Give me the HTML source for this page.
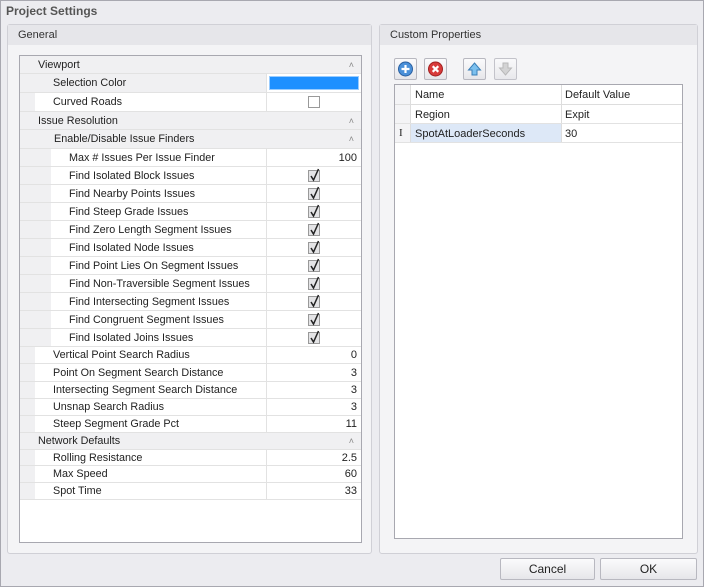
<!DOCTYPE html>
<html><head><meta charset="utf-8"><style>
*{box-sizing:border-box;margin:0;padding:0}
body{width:704px;height:587px;background:#eeeef2;font-family:"Liberation Sans",sans-serif;font-size:11px;color:#222;position:relative;overflow:hidden}
.a{position:absolute}
.win{left:0;top:0;width:704px;height:587px;border:1px solid #a8a8b0;background:#ececf0}
.title{left:6px;top:4px;font-weight:bold;font-size:12px;color:#555}
.grp{border:1px solid #d0d0d6;background:#f4f4f6;border-radius:3px}
.gh{background:#e6e6ea;height:20px;padding:4px 0 0 10px;font-size:11px;color:#333}
.r{position:absolute;left:0;width:341px;border-bottom:1px solid #e2e2e2}
.t{position:absolute;top:50%;transform:translateY(-50%);white-space:nowrap;font-size:10.8px}
.ind{position:absolute;left:0;top:0;bottom:0;background:#f0f0f2}
.v{position:absolute;left:246px;right:0;top:0;bottom:0;border-left:1px solid #e2e2e2;background:#fff}
.num{position:absolute;right:4px;top:50%;transform:translateY(-50%)}
.cb{position:absolute;left:41px;top:50%;transform:translateY(-50%);width:12px;height:12px;border:1px solid #999;background:#e4e4e6}
.arr{position:absolute;right:7px;top:50%;transform:translateY(-50%);color:#888;font-size:9px}
.btn{border:1px solid #b8b8c0;border-radius:2px;background:linear-gradient(#fbfbfc,#e6e6ea)}
</style></head><body>
<div class="a win"></div>
<div class="a title">Project Settings</div>

<div class="a grp" style="left:7px;top:24px;width:365px;height:530px"><div class="gh">General</div></div>
<div class="a" style="left:19px;top:55px;width:343px;height:488px;border:1px solid #a8a8b0;background:#fff"></div>
<div class="a" style="left:20px;top:56px;width:341px;height:444px" id="g">
<div class="r" style="top:0;height:18px;background:#f0f0f2"><span class="t" style="left:18px">Viewport</span><span class="arr">&#x2C4;</span></div>
<div class="r" style="top:18px;height:19px;background:#f0f0f2"><div class="ind" style="width:15px"></div><span class="t" style="left:33px">Selection Color</span><div class="v" style="background:#fff"><div class="a" style="left:2px;top:2px;right:2px;bottom:2px;background:#1e90ff;border:1px solid #9cf"></div></div></div>
<div class="r" style="top:37px;height:19px"><div class="ind" style="width:15px"></div><span class="t" style="left:33px">Curved Roads</span><div class="v"><div class="cb" style="background:#fff"></div></div></div>
<div class="r" style="top:56px;height:18px;background:#f0f0f2"><span class="t" style="left:18px">Issue Resolution</span><span class="arr">&#x2C4;</span></div>
<div class="r" style="top:74px;height:19px;background:#f0f0f2"><div class="ind" style="width:15px"></div><span class="t" style="left:34px">Enable/Disable Issue Finders</span><span class="arr">&#x2C4;</span></div>
<div class="r" style="top:93px;height:18px"><div class="ind" style="width:31px"></div><span class="t" style="left:49px">Max # Issues Per Issue Finder</span><div class="v"><span class="num">100</span></div></div>
<div class="r" style="top:111px;height:18px"><div class="ind" style="width:31px"></div><span class="t" style="left:49px">Find Isolated Block Issues</span><div class="v"><div class="cb"></div></div></div>
<div class="r" style="top:129px;height:18px"><div class="ind" style="width:31px"></div><span class="t" style="left:49px">Find Nearby Points Issues</span><div class="v"><div class="cb"></div></div></div>
<div class="r" style="top:147px;height:18px"><div class="ind" style="width:31px"></div><span class="t" style="left:49px">Find Steep Grade Issues</span><div class="v"><div class="cb"></div></div></div>
<div class="r" style="top:165px;height:18px"><div class="ind" style="width:31px"></div><span class="t" style="left:49px">Find Zero Length Segment Issues</span><div class="v"><div class="cb"></div></div></div>
<div class="r" style="top:183px;height:18px"><div class="ind" style="width:31px"></div><span class="t" style="left:49px">Find Isolated Node Issues</span><div class="v"><div class="cb"></div></div></div>
<div class="r" style="top:201px;height:18px"><div class="ind" style="width:31px"></div><span class="t" style="left:49px">Find Point Lies On Segment Issues</span><div class="v"><div class="cb"></div></div></div>
<div class="r" style="top:219px;height:18px"><div class="ind" style="width:31px"></div><span class="t" style="left:49px">Find Non-Traversible Segment Issues</span><div class="v"><div class="cb"></div></div></div>
<div class="r" style="top:237px;height:18px"><div class="ind" style="width:31px"></div><span class="t" style="left:49px">Find Intersecting Segment Issues</span><div class="v"><div class="cb"></div></div></div>
<div class="r" style="top:255px;height:18px"><div class="ind" style="width:31px"></div><span class="t" style="left:49px">Find Congruent Segment Issues</span><div class="v"><div class="cb"></div></div></div>
<div class="r" style="top:273px;height:18px"><div class="ind" style="width:31px"></div><span class="t" style="left:49px">Find Isolated Joins Issues</span><div class="v"><div class="cb"></div></div></div>
<div class="r" style="top:291px;height:17px"><div class="ind" style="width:15px"></div><span class="t" style="left:33px">Vertical Point Search Radius</span><div class="v"><span class="num">0</span></div></div>
<div class="r" style="top:308px;height:18px"><div class="ind" style="width:15px"></div><span class="t" style="left:33px">Point On Segment Search Distance</span><div class="v"><span class="num">3</span></div></div>
<div class="r" style="top:326px;height:17px"><div class="ind" style="width:15px"></div><span class="t" style="left:33px">Intersecting Segment Search Distance</span><div class="v"><span class="num">3</span></div></div>
<div class="r" style="top:343px;height:17px"><div class="ind" style="width:15px"></div><span class="t" style="left:33px">Unsnap Search Radius</span><div class="v"><span class="num">3</span></div></div>
<div class="r" style="top:360px;height:17px"><div class="ind" style="width:15px"></div><span class="t" style="left:33px">Steep Segment Grade Pct</span><div class="v"><span class="num">11</span></div></div>
<div class="r" style="top:377px;height:17px;background:#f0f0f2"><span class="t" style="left:18px">Network Defaults</span><span class="arr">&#x2C4;</span></div>
<div class="r" style="top:394px;height:16px"><div class="ind" style="width:15px"></div><span class="t" style="left:33px">Rolling Resistance</span><div class="v"><span class="num">2.5</span></div></div>
<div class="r" style="top:410px;height:17px"><div class="ind" style="width:15px"></div><span class="t" style="left:33px">Max Speed</span><div class="v"><span class="num">60</span></div></div>
<div class="r" style="top:427px;height:17px"><div class="ind" style="width:15px"></div><span class="t" style="left:33px">Spot Time</span><div class="v"><span class="num">33</span></div></div>
</div>

<div class="a grp" style="left:379px;top:24px;width:319px;height:530px"><div class="gh">Custom Properties</div></div>
<div class="a btn" style="left:394px;top:58px;width:23px;height:22px"><svg width="21" height="20"><circle cx="10.5" cy="10" r="7" fill="#4a90d9" stroke="#2a5fa0"/><path d="M10.5 6v8M6.5 10h8" stroke="#fff" stroke-width="2.2"/></svg></div>
<div class="a btn" style="left:424px;top:58px;width:23px;height:22px"><svg width="21" height="20"><circle cx="10.5" cy="10" r="7" fill="#d83a3a" stroke="#a02020"/><path d="M7.7 7.2l5.6 5.6M13.3 7.2l-5.6 5.6" stroke="#fff" stroke-width="2.2"/></svg></div>
<div class="a btn" style="left:463px;top:58px;width:23px;height:22px"><svg width="21" height="20"><path d="M10.5 4l6 7h-3.5v5h-5v-5H4.5z" fill="#7cc0ee" stroke="#3a7fb8"/></svg></div>
<div class="a btn" style="left:494px;top:58px;width:23px;height:22px;opacity:.8"><svg width="21" height="20"><path d="M10.5 16l6-7h-3.5V4h-5v5H4.5z" fill="#ccc" stroke="#aaa"/></svg></div>
<div class="a" style="left:394px;top:84px;width:289px;height:455px;border:1px solid #a8a8b0;background:#fff"></div>
<div class="a" style="left:395px;top:85px;width:287px;height:20px;border-bottom:1px solid #ddd">
 <div class="a" style="left:0;top:0;width:16px;height:19px;background:#f4f4f6;border-right:1px solid #ddd"></div>
 <span class="a" style="left:20px;top:4px">Name</span>
 <div class="a" style="left:166px;top:0;height:19px;border-left:1px solid #ddd"></div>
 <span class="a" style="left:170px;top:4px">Default Value</span>
</div>
<div class="a" style="left:395px;top:105px;width:287px;height:19px;border-bottom:1px solid #e2e2e2">
 <div class="a" style="left:0;top:0;width:16px;height:18px;background:#f4f4f6;border-right:1px solid #ddd"></div>
 <span class="a" style="left:20px;top:4px">Region</span>
 <div class="a" style="left:166px;top:0;height:18px;border-left:1px solid #ddd"></div>
 <span class="a" style="left:170px;top:4px">Expit</span>
</div>
<div class="a" style="left:395px;top:124px;width:287px;height:19px;border-bottom:1px solid #e2e2e2">
 <div class="a" style="left:0;top:0;width:16px;height:18px;background:#f4f4f6;border-right:1px solid #ddd"><span class="a" style="left:4px;top:3px;font-family:'Liberation Serif',serif">I</span></div>
 <div class="a" style="left:16px;top:0;width:150px;height:18px;background:#dde8f7"></div>
 <span class="a" style="left:20px;top:4px">SpotAtLoaderSeconds</span>
 <div class="a" style="left:166px;top:0;height:18px;border-left:1px solid #ddd"></div>
 <span class="a" style="left:170px;top:4px">30</span>
</div>

<div class="a btn" style="left:500px;top:558px;width:95px;height:22px;text-align:center;line-height:20px;font-size:12px">Cancel</div>
<div class="a btn" style="left:600px;top:558px;width:97px;height:22px;text-align:center;line-height:20px;font-size:12px">OK</div>
<script>
document.querySelectorAll('.cb').forEach(function(c,i){if(i>0){c.innerHTML='<svg width="12" height="14" style="position:absolute;left:0;top:-3px;overflow:visible"><path d="M2 8l2.5 4L9.5 1" fill="none" stroke="#222" stroke-width="1.5"/></svg>';}});
</script>
</body></html>
